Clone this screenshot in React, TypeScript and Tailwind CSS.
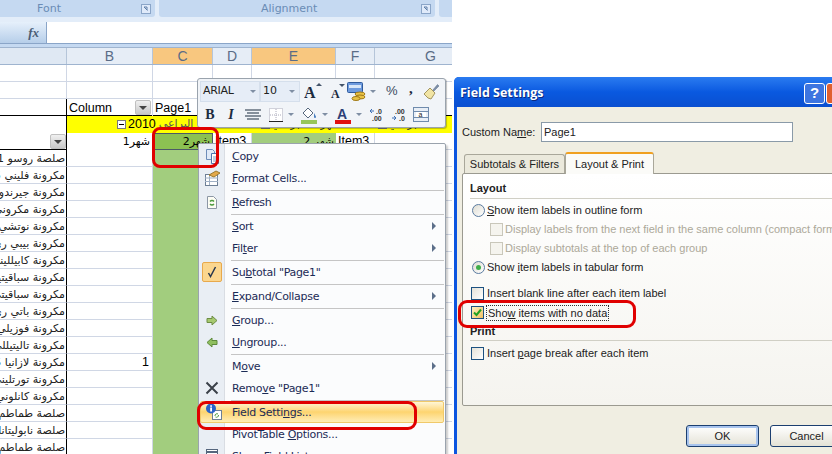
import type { ReactNode } from "react";

const names = [
  "صلصة روسو 1",
  "مكرونة فليني 5",
  "مكرونة جيرندو",
  "مكرونة مكروني",
  "مكرونة نوتشي",
  "مكرونة بيبي ري",
  "مكرونة كابيلليني",
  "مكرونة سباقيتيني",
  "مكرونة سباقيتي",
  "مكرونة باتي ري",
  "مكرونة فوزيلي",
  "مكرونة تاليتيللي",
  "مكرونة لازانيا 5",
  "مكرونة تورتليني",
  "مكرونة كانلوني",
  "صلصة طماطم",
  "صلصة نابوليتانا",
  "صلصة طماطم",
];

const cols = "grid grid-cols-[67px_86px_60px_39px_84px_39px_112px]";
const cell = "border-r border-b border-[#d0d7e5] h-[17px] overflow-hidden whitespace-nowrap";

function Launcher() {
  return (
    <svg width="10" height="10" viewBox="0 0 10 10" className="shrink-0">
      <rect x="0.5" y="0.5" width="9" height="9" fill="#dfeafa" stroke="#8aa5c8" />
      <path d="M3 3h3v3M3 3l3.5 3.5" stroke="#5f7fa8" fill="none" />
    </svg>
  );
}

function Sheet() {
  return (
    <div className="w-[452px] overflow-hidden text-[12.5px] text-black">
      {/* ribbon group labels */}
      <div className="flex h-[22px] bg-[#e3edf9] gap-[4px]">
        <div className="w-[155px] h-[17px] bg-[#c5d9f1] rounded-br-[3px] flex items-center justify-between pl-[37px] pr-[4px] text-[#6a8cb5] text-[11px] font-['DejaVu_Sans',sans-serif]">
          <span className="mt-[2px]">Font</span> <Launcher />
        </div>
        <div className="w-[276px] h-[17px] bg-[#c5d9f1] rounded-b-[3px] flex items-center justify-between pl-[102px] pr-[4px] text-[#6a8cb5] text-[11px] font-['DejaVu_Sans',sans-serif]">
          <span className="mt-[2px]">Alignment</span> <Launcher />
        </div>
        <div className="flex-1 h-[17px] bg-[#c5d9f1] rounded-bl-[3px]" />
      </div>
      {/* formula bar */}
      <div className="flex h-[22px] border-b border-[#8aa5c8] bg-white">
        <div className="w-[47px] bg-gradient-to-b from-[#e6f0fb] to-[#b6cee9] border-r border-[#8aa5c8] flex items-center justify-end pr-[7px]">
          <span className="font-['Liberation_Serif',serif] italic font-bold text-[13px] text-[#4a5d75]">fx</span>
        </div>
      </div>
      <div className="h-[3px] bg-[#c5d9f1]" />
      {/* column headers */}
      <div className={`${cols} h-[18px] text-[14px] leading-none text-[#5a6c86] border-y border-[#9fb4cf]`}>
        <div className="bg-[#dfe8f3] border-r border-[#b5c5d9]" />
        {["B", "C", "D", "E", "F", "G"].map((c) => (
          <div
            key={c}
            className={`flex items-center justify-center border-r border-[#b5c5d9] ${c === "C" || c === "E" ? "bg-[#f8c77f]" : "bg-[#e6edf6]"}`}
          >
            {c}
          </div>
        ))}
      </div>
      {/* empty rows */}
      {[0, 1].map((r) => (
        <div key={r} className={cols}>
          {[0, 1, 2, 3, 4, 5, 6].map((c) => (
            <div key={c} className={cell} />
          ))}
        </div>
      ))}
      {/* pivot header */}
      <div className={`${cols} border-t border-black -mt-px`}>
        <div className="h-[17px] border-r border-black" />
        <div className="h-[17px] flex items-center justify-between pl-[2px] pr-[1px] border-r border-[#d0d7e5]">
          <span className="mt-px">Column</span> <Drop />
        </div>
        <div className="h-[17px] pl-[2px] leading-[18px]">Page1</div>
      </div>
      <div className={`${cols} border-t border-black -mt-px bg-white`}>
        <div className="h-[17px] border-r border-black bg-white" />
        <div className="col-span-6 h-[17px] bg-[#ffff00] flex items-center pl-[50px] overflow-hidden">
          <Minus />
          <span>2010</span>
          <span className="ml-[3px] w-[102px] font-['DejaVu_Sans',sans-serif] text-[11px] text-[#555]">البراعي</span>
          <Minus />
          <span className="w-[106px] whitespace-nowrap overflow-hidden font-['DejaVu_Sans',sans-serif] text-[11px] text-[#333]">شهر 2 البراعي</span>
          <Minus />
          <span className="font-['DejaVu_Sans',sans-serif] text-[11px] text-[#333]">البراعي</span>
        </div>
      </div>
      <div className={`${cols} border-t border-black -mt-px`}>
        <div className="h-[17px] border-r border-b border-black flex justify-end">
          <Drop />
        </div>
        <div className="h-[17px] text-right pr-[2px] leading-[17px] border-r border-[#d0d7e5]">
          <span dir="rtl" className="font-['DejaVu_Sans',sans-serif] text-[11px]">شهر1</span>
        </div>
        <div className="h-[17px] bg-[#8cc152] border border-[#4c5a66] text-right pr-[2px] leading-[15px]">
          <span dir="rtl" className="font-['DejaVu_Sans',sans-serif] text-[11px]">شهر2</span>
        </div>
        <div className="h-[17px] pl-[2px] leading-[17px] border-r border-[#d0d7e5]">Item3</div>
        <div className="h-[17px] bg-[#a2cd7e] text-right pr-[2px] leading-[17px]">
          <span dir="rtl" className="font-['DejaVu_Sans',sans-serif] text-[11px]">شهر 2</span>
        </div>
        <div className="h-[17px] pl-[2px] leading-[17px] border-r border-[#d0d7e5]">Item3</div>
        <div className="h-[17px] border-b border-[#d0d7e5]" />
      </div>
      {/* data rows */}
      {names.map((name, i) => (
        <div key={i} className={cols}>
          <div dir="rtl" className="h-[17px] border-r border-r-black border-b border-b-[#d0d7e5] overflow-hidden whitespace-nowrap pr-[1px] font-['DejaVu_Sans',sans-serif] text-[11px] leading-[18px] text-[#222]">
            {name}
          </div>
          <div className={`${cell} text-right pr-[3px] leading-[17px]`}>{i === 12 ? "1" : ""}</div>
          <div className="h-[17px] bg-[#a2cd7e]" />
          <div className={cell} />
          <div className={cell} />
          <div className={cell} />
          <div className={cell} />
        </div>
      ))}
    </div>
  );
}

function Minus() {
  return (
    <span className="w-[9px] h-[9px] border border-[#7a7a7a] bg-white flex items-center justify-center mr-[2px] shrink-0">
      <span className="w-[5px] h-px bg-black" />
    </span>
  );
}

function Drop() {
  return (
    <span className="w-[16px] h-[15px] my-px bg-gradient-to-b from-[#f0f0f0] to-[#c8c8c8] border border-[#c0c0c0] rounded-[2px] flex items-center justify-center shrink-0">
      <span className="w-0 h-0 border-x-[4px] border-x-transparent border-t-[4px] border-t-[#444]" />
    </span>
  );
}

function Caret({ className = "" }: { className?: string }) {
  return <span className={`w-0 h-0 border-x-[3px] border-x-transparent border-t-[3px] border-t-[#7f8ea3] shrink-0 ${className}`} />;
}

function MiniToolbar() {
  return (
    <div className="absolute left-[197px] top-[78px] w-[249px] h-[50px] rounded-[3px] border border-[#9aa3ad] bg-[#f1f4f8] shadow-[1px_1px_1px_rgba(0,0,0,0.25)] px-px py-px">
      <div className="flex items-center h-[22px]">
        <div className="w-[60px] h-[21px] ml-px shrink-0 bg-[#e6edf7] border border-[#d5dfec] flex items-center justify-between pl-[2px] pr-[3px] text-[11px] tracking-[-0.3px] text-[#222] font-['DejaVu_Sans',sans-serif]">
          ARIAL <Caret />
        </div>
        <div className="w-[40px] h-[21px] shrink-0 bg-[#e6edf7] border border-[#d5dfec] flex items-center justify-between pl-[2px] pr-[4px] text-[11px] text-[#222] font-['DejaVu_Sans',sans-serif]">
          10 <Caret />
        </div>
        <svg width="20" height="18" viewBox="0 0 20 18" className="ml-[4px] shrink-0">
          <text x="0" y="16" fontFamily="Liberation Serif, serif" fontWeight="700" fontSize="16" fill="#1d2c3f">A</text>
          <path d="M12 4l3-3 3 3z" fill="#44546a" />
        </svg>
        <svg width="17" height="18" viewBox="0 0 17 18" className="ml-[6px] shrink-0">
          <text x="1" y="16" fontFamily="Liberation Serif, serif" fontWeight="700" fontSize="12" fill="#1d2c3f">A</text>
          <path d="M9 2h6l-3 3z" fill="#44546a" />
        </svg>
        <svg width="19" height="19" viewBox="0 0 19 19" className="shrink-0">
          <rect x="0.500" y="0.500" width="15" height="10" rx="1" fill="#6d9ade" stroke="#2f5a9c" />
          <rect x="2" y="3" width="12" height="3" fill="#d8e6f8" />
          <ellipse cx="13" cy="12" rx="5" ry="2" fill="#e9c244" stroke="#a07a1a" />
          <ellipse cx="13" cy="15" rx="5" ry="2" fill="#e9c244" stroke="#a07a1a" />
          <ellipse cx="9" cy="16.500" rx="4" ry="2" fill="#e9c244" stroke="#a07a1a" />
        </svg>
        <Caret className="ml-[4px]" />
        <span className="text-[13px] w-[12px] text-[#3a4a5e] font-['Liberation_Sans',sans-serif] ml-[10px]">%</span>
        <span className="text-[15px] font-bold text-[#1d2c3f] font-['Liberation_Serif',serif] ml-[11px] -mt-[6px]">,</span>
        <svg width="17" height="17" viewBox="0 0 17 17" className="ml-[10px] shrink-0">
          <path d="M9 8l5.500-6.500 1.500 1.500-6 6z" fill="#7c8ea8" stroke="#5d6e88" strokeWidth="0.500" />
          <path d="M1 11l6-6 5 5-4 6-3-1z" fill="#f1e4a4" stroke="#a39560" />
        </svg>
      </div>
      <div className="flex items-center h-[25px]">
        <span className="w-[12px] ml-[5px] text-center font-['Liberation_Serif',serif] font-bold text-[14px] text-[#1d2c3f]">B</span>
        <span className="w-[10px] ml-[10px] text-center font-['Liberation_Serif',serif] italic font-bold text-[14px] text-[#1d2c3f]">I</span>
        <svg width="16" height="12" viewBox="0 0 16 12" className="ml-[9px] shrink-0">
          <path d="M0 1h16M2 4h12M0 7h16M2 10h12" stroke="#1d2c3f" strokeWidth="1.200" />
        </svg>
        <svg width="14" height="14" viewBox="0 0 14 14" className="ml-[8px] shrink-0">
          <rect x="0.5" y="0.5" width="13" height="13" fill="#fff" stroke="#aab" strokeDasharray="1 1" />
          <path d="M7 1v12M1 7h12" stroke="#aab" strokeDasharray="1 1" />
          <path d="M0 13.500h14" stroke="#222" />
        </svg>
        <Caret className="ml-[5px]" />
        <svg width="16" height="18" viewBox="0 0 16 18" className="ml-[7px] shrink-0">
          <path d="M2 7l5-5 5 5-5 5z" fill="#fff" stroke="#56677d" />
          <path d="M13 7c1 2 2 3 2 4a1 1 0 0 1-2 0z" fill="#4a7fc0" />
          <rect x="0" y="14" width="16" height="4" fill="#97c65a" />
        </svg>
        <Caret className="ml-[5px]" />
        <svg width="16" height="18" viewBox="0 0 16 18" className="ml-[7px] shrink-0">
          <text x="2" y="13" fontFamily="Liberation Sans, sans-serif" fontWeight="700" fontSize="14" fill="#2d3f77">A</text>
          <rect x="0" y="14" width="16" height="4" fill="#e01010" />
        </svg>
        <Caret className="ml-[5px]" />
        <svg width="16" height="14" viewBox="0 0 16 14" className="ml-[7px] shrink-0">
          <path d="M5 3H1M1 3l2-2M1 3l2 2" stroke="#3d6fb4" fill="none" />
          <text x="7" y="6" fontSize="7" fontFamily="Liberation Sans, sans-serif" fontWeight="700" fill="#333">.0</text>
          <text x="3" y="13" fontSize="7" fontFamily="Liberation Sans, sans-serif" fontWeight="700" fill="#333">.00</text>
        </svg>
        <svg width="16" height="14" viewBox="0 0 16 14" className="ml-[6px] shrink-0">
          <text x="4" y="6" fontSize="7" fontFamily="Liberation Sans, sans-serif" fontWeight="700" fill="#333">.00</text>
          <path d="M1 10h4M5 10l-2-2M5 10l-2 2" stroke="#3d6fb4" fill="none" />
          <text x="8" y="13" fontSize="7" fontFamily="Liberation Sans, sans-serif" fontWeight="700" fill="#333">.0</text>
        </svg>
        <svg width="16" height="15" viewBox="0 0 16 15" className="ml-[6px] shrink-0">
          <rect x="0.5" y="0.5" width="15" height="14" fill="#e8eef6" stroke="#6f8bad" />
          <path d="M0 4.500h16M0 10.500h16" stroke="#6f8bad" />
          <rect x="3" y="5" width="10" height="5" fill="#fff" />
          <text x="5.500" y="10" fontSize="7" fontFamily="Liberation Sans, sans-serif" fill="#222">a</text>
        </svg>
      </div>
    </div>
  );
}

type Item = {
  label?: ReactNode;
  icon?: ReactNode;
  arrow?: boolean;
  active?: boolean;
};

const menuItems: Item[] = [
  {
    label: <><u>C</u>opy</>,
    icon: (
      <svg width="15" height="16" viewBox="0 0 15 16">
        <path d="M1.500 1.500h6l2 2v8h-8z" fill="#dfe9f7" stroke="#6d8cb8" />
        <path d="M6.500 5.500h5l2 2v8h-7z" fill="#fff" stroke="#4d74ad" />
        <path d="M8 9h4M8 11h4M8 13h4" stroke="#7f9cc5" />
      </svg>
    ),
  },
  {
    label: <><u>F</u>ormat Cells...</>,
    icon: (
      <svg width="17" height="16" viewBox="0 0 17 16">
        <rect x="1.500" y="4.500" width="12" height="11" fill="#fff" stroke="#6d7f95" />
        <path d="M1 8h13M1 11.500h13M5.500 5v10" stroke="#9fb0c5" />
        <path d="M5 5l7-4 4 2-6 4z" fill="#e3a94a" stroke="#9b7b32" />
      </svg>
    ),
  },
  { },
  {
    label: <><u>R</u>efresh</>,
    icon: (
      <svg width="12" height="15" viewBox="0 0 12 15">
        <path d="M1.500 1.500h6l3 3v9h-9z" fill="#fdfdf5" stroke="#8c97a5" />
        <path d="M4 6.500a2.500 2.500 0 0 1 4 0M8 9a2.500 2.500 0 0 1-4 0" stroke="#4c9a3c" fill="none" strokeWidth="1.300" />
      </svg>
    ),
  },
  { },
  { label: <><u>S</u>ort</>, arrow: true },
  { label: <>Fil<u>t</u>er</>, arrow: true },
  { },
  {
    label: <>Su<u>b</u>total "Page1"</>,
    icon: (
      <span className="w-[20px] h-[20px] bg-[#fbd68e] border border-[#e8a94c] rounded-[2px] flex items-center justify-center">
        <svg width="10" height="12" viewBox="0 0 10 12">
          <path d="M1.500 7l2 3.500L8.500 1" stroke="#26364e" strokeWidth="1.500" fill="none" />
        </svg>
      </span>
    ),
  },
  { },
  { label: <><u>E</u>xpand/Collapse</>, arrow: true },
  { },
  {
    label: <><u>G</u>roup...</>,
    icon: (
      <svg width="12" height="11" viewBox="0 0 12 11">
        <path d="M1 3.500h5V1l5 4.500L6 10V7.500H1z" fill="#a6c96f" stroke="#6d8d45" />
      </svg>
    ),
  },
  {
    label: <><u>U</u>ngroup...</>,
    icon: (
      <svg width="12" height="11" viewBox="0 0 12 11">
        <path d="M11 3.500H6V1L1 5.500 6 10V7.500h5z" fill="#8fbf5f" stroke="#5d8a3b" />
      </svg>
    ),
  },
  { },
  { label: <>M<u>o</u>ve</>, arrow: true },
  {
    label: <>Remo<u>v</u>e "Page1"</>,
    icon: (
      <svg width="14" height="14" viewBox="0 0 14 14">
        <path d="M1.500 1.500l11 11M12.500 1.500l-11 11" stroke="#3a4048" strokeWidth="2" />
      </svg>
    ),
  },
  { },
  {
    label: <>Field Setti<u>n</u>gs...</>,
    active: true,
    icon: (
      <svg width="18" height="18" viewBox="0 0 18 18">
        <rect x="7.500" y="7.500" width="9" height="9" fill="#fff" stroke="#6d7f95" />
        <path d="M10 13a2 2 0 0 1 3-2M13.500 12a2 2 0 0 1-3 2" stroke="#4c9a3c" fill="none" />
        <circle cx="6" cy="5.500" r="5" fill="#2a62c9" />
        <rect x="5.200" y="4.500" width="1.800" height="4" fill="#fff" />
        <rect x="5.200" y="2.300" width="1.800" height="1.500" fill="#fff" />
      </svg>
    ),
  },
  { label: <>PivotTable <u>O</u>ptions...</> },
  {
    label: <>Show Field <u>L</u>ist</>,
    icon: (
      <svg width="12" height="14" viewBox="0 0 12 14">
        <rect x="0.500" y="0.500" width="11" height="13" fill="#fff" stroke="#55667d" />
        <path d="M1 3h10" stroke="#55667d" strokeWidth="2" />
      </svg>
    ),
  },
];

function ContextMenu() {
  return (
    <div className="absolute left-[198px] top-[143px] w-[248px] h-[330px] border border-[#9aa3ad] bg-[#fbfcfd] rounded-[2px] py-px text-[11px] tracking-[-0.3px] text-[#1b2b56] font-['DejaVu_Sans',sans-serif] shadow-[2px_2px_2px_rgba(0,0,0,0.2)]">
      <div className="absolute left-0 top-0 bottom-0 w-[26px] bg-[#e9eef4] border-r border-[#d9dde3]" />
      {menuItems.map((item, i) =>
        item.label ? (
          <div
            key={i}
            className={`relative h-[22px] flex items-center ${item.active ? "mx-[1px] bg-gradient-to-b from-[#fff6d5] via-[#fdd46f] to-[#ffedb5] border border-[#f0c96a] rounded-[2px]" : ""}`}
          >
            <span className={`${item.active ? "w-[25px]" : "w-[26px]"} flex items-center justify-center shrink-0`}>{item.icon}</span>
            <span className={`${item.active ? "ml-[6px]" : "ml-[7px]"} flex-1 whitespace-nowrap mt-[2px]`}>{item.label}</span>
            {item.arrow && (
              <span className="mr-[9px] w-0 h-0 border-y-[4px] border-y-transparent border-l-[4px] border-l-[#5c6f8a]" />
            )}
          </div>
        ) : (
          <div key={i} className="relative h-[2px] ml-[32px] mr-[1px] border-b border-[#c5c5c5]" />
        ),
      )}
    </div>
  );
}

function Check({ on, disabled, className = "" }: { on?: boolean; disabled?: boolean; className?: string }) {
  return (
    <span
      className={`w-[13px] h-[13px] border flex items-center justify-center shrink-0 ${disabled ? "border-[#c9c7ba] bg-[#f5f4ee]" : on ? "border-[#1c5180] bg-gradient-to-br from-[#fdf0c0] to-[#f0c060]" : "border-[#1c5180] bg-gradient-to-br from-[#e4e2d8] to-[#fff]"} ${className}`}
    >
      {on && (
        <svg width="9" height="9" viewBox="0 0 9 9">
          <path d="M1 4.500l2.500 2.500L8 1.500" stroke="#21a121" strokeWidth="2" fill="none" />
        </svg>
      )}
    </span>
  );
}

function Radio({ on }: { on?: boolean }) {
  return (
    <span className="w-[13px] h-[13px] rounded-full border border-[#5a7ba0] bg-gradient-to-br from-[#dedcd2] to-white flex items-center justify-center shrink-0">
      {on && <span className="w-[5px] h-[5px] rounded-full bg-[#3fae4a]" />}
    </span>
  );
}

function Dialog() {
  const row = "flex items-center h-[19px] gap-[2px] whitespace-nowrap";
  return (
    <div className="absolute left-[454px] top-[77px] w-[392px] h-[390px] bg-[#0c55e0] rounded-t-[5px] px-[3px] text-[11px] text-[#222] font-['Liberation_Sans',sans-serif] flex flex-col">
      <div className="h-[30px] -mx-[3px] pl-[6px] rounded-t-[5px] bg-gradient-to-b from-[#2a7bf0] via-[#0a59e0] to-[#0a4fd0] flex justify-between shrink-0">
        <span className="text-white font-bold text-[12.5px] mt-[7px] font-['Open_Sans',sans-serif] [text-shadow:1px_1px_0_#0a2a80]">Field Settings</span>
        <div className="flex gap-[1px] mr-[-1px] mt-[6px] h-[21px]">
          <span className="w-[21px] h-[21px] rounded-[3px] border border-white bg-[#3d75e0] text-white font-bold text-[15px] flex items-center justify-center font-['Liberation_Sans',sans-serif]">?</span>
          <span className="w-[21px] h-[21px] rounded-[3px] border border-white bg-[#e0602f]" />
        </div>
      </div>
      <div className="flex-1 bg-[#f0eee2] pl-[5px] relative">
        {/* custom name */}
        <div className="flex items-center h-[20px] mt-[15px]">
          <span className="w-[79px] whitespace-nowrap shrink-0">Custom Na<u>m</u>e:</span>
          <div className="w-[252px] h-[20px] border border-[#8a9aa8] bg-white pl-[2px] leading-[18px]">Page1</div>
        </div>
        {/* tabs */}
        <div className="flex items-end h-[22px] mt-[9px] pl-[2px] relative z-10">
          <div className="w-[101px] h-[19px] border border-b-0 border-[#a9a79a] rounded-t-[3px] bg-[#ebe9dc] flex items-center justify-center whitespace-nowrap">Subtotals &amp; Filters</div>
          <div className="w-[89px] h-[22px] border-x border-[#a9a79a] border-t-2 border-t-[#f0a020] rounded-t-[3px] bg-[#fbfbf8] flex items-center justify-center whitespace-nowrap -mb-px">Layout &amp; Print</div>
        </div>
        {/* panel */}
        <div className="h-[233px] border border-[#9b9a90] rounded-[2px] bg-gradient-to-b from-white to-[#f5f4ef] pl-[7px]">
          <div className="font-bold h-[18px] mt-[7px] border-b border-[#d0cfc5] leading-[15px]">Layout</div>
          <div className={`${row} mt-[2px] pl-[2px]`}>
            <Radio /> <span><u>S</u>how item labels in outline form</span>
          </div>
          <div className={`${row} pl-[20px] text-[#aca899] gap-[2px]`}>
            <Check disabled /> Display labels from the next field in the same column (compact form)
          </div>
          <div className={`${row} pl-[20px] text-[#aca899] gap-[2px]`}>
            <Check disabled /> Display subtotals at the top of each group
          </div>
          <div className={`${row} pl-[2px]`}>
            <Radio on /> <span>Show <u>i</u>tem labels in tabular form</span>
          </div>
          <div className={`${row} mt-[7px] pl-[1px]`}>
            <Check /> <span className="ml-[1px]">Insert blank line after each item label</span>
          </div>
          <div className={`${row} pl-[1px]`}>
            <Check on /> <span className="ml-[1px] outline-1 outline-dotted outline-[#333] px-px leading-[14px]">Sho<u>w</u> items with no data</span>
          </div>
          <div className="font-bold h-[18px] mt-px border-b border-[#d0cfc5] leading-[16px]">Print</div>
          <div className={`${row} mt-[3px] pl-[1px]`}>
            <Check /> <span className="ml-[1px]">Insert <u>p</u>age break after each item</span>
          </div>
        </div>
        {/* buttons */}
        <div className="flex gap-[11px] mt-[19px] ml-[224px]">
          <button className="w-[73px] h-[22px] rounded-[3px] border border-[#1c3f70] bg-gradient-to-b from-white to-[#e4e2d6] shadow-[inset_0_0_0_2px_#a8c4ee] text-[#222]">OK</button>
          <button className="w-[73px] h-[22px] rounded-[3px] border border-[#1c3f70] bg-gradient-to-b from-white to-[#e4e2d6] text-[#222]">Cancel</button>
        </div>
      </div>
    </div>
  );
}

export default function App() {
  return (
    <div className="relative w-[832px] h-[454px] overflow-hidden bg-white font-['Liberation_Sans',sans-serif]">
      <Sheet />
      <Dialog />
      <MiniToolbar />
      <ContextMenu />
      {/* red hand-drawn highlights */}
      <div className="absolute left-[152px] top-[127px] w-[67px] h-[41px] border-[3px] border-[#e00000] rounded-[8px]" />
      <div className="absolute left-[197px] top-[401px] w-[220px] h-[29px] border-[3px] border-[#e00000] rounded-[9px]" />
      <div className="absolute left-[458px] top-[300px] w-[178px] h-[28px] border-[3px] border-[#e00000] rounded-[9px]" />
    </div>
  );
}
